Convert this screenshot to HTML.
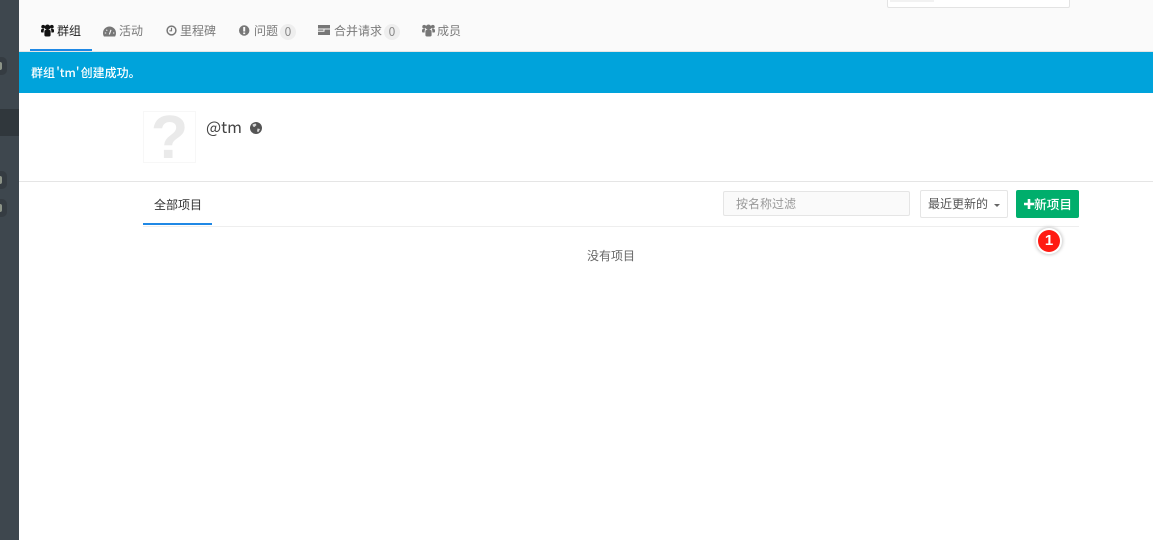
<!DOCTYPE html>
<html lang="zh">
<head>
<meta charset="utf-8">
<style>
html,body{margin:0;padding:0;background:#fff;}
body{width:1153px;height:540px;position:relative;overflow:hidden;font-family:"Noto Sans CJK SC","Liberation Sans",sans-serif;font-size:12px;color:#555;}
.a{position:absolute;white-space:nowrap;line-height:18px;}
svg{position:absolute;display:block;}
.bdg{position:absolute;left:-8px;width:15px;height:18px;background:#353c42;border-radius:5px;}
.bdg i{position:absolute;left:7px;top:5px;width:3px;height:8px;background:#8d9488;border-radius:0 2px 2px 0;}
.cnt{position:absolute;width:16px;height:16px;border-radius:8px;background:#eee;color:#888;font-size:12px;line-height:16px;text-align:center;}
</style>
</head>
<body>
<div class="a" style="left:19px;top:0;width:1134px;height:51px;background:#fafafa;"></div>
<div class="a" style="left:19px;top:51px;width:1134px;height:1px;background:#e5e5e5;"></div>

<div class="a" style="left:887px;top:-5px;width:181px;height:11px;background:#fff;border:1px solid #e3e3e3;border-radius:2px;"></div>
<div class="a" style="left:890px;top:0;width:44px;height:2px;background:#f2f2f2;"></div>

<div class="a" style="left:0;top:0;width:19px;height:540px;background:#3e474e;"></div>
<div class="a" style="left:0;top:109px;width:19px;height:27px;background:#30373c;"></div>
<div class="bdg" style="top:57px;"><i></i></div>
<div class="bdg" style="top:171px;"><i></i></div>
<div class="bdg" style="top:199px;"><i></i></div>

<svg style="left:41px;top:24px" width="13" height="13" viewBox="0 0 13 13"><g fill="#111"><circle cx="6.500" cy="3.300" r="2.800"/><circle cx="2.200" cy="2.800" r="1.900"/><circle cx="10.800" cy="2.800" r="1.900"/><path d="M0 6.200Q0 5 1.200 5H3.200Q2.600 6 2.600 8.500H.8Q0 8.500 0 7.500zM13 6.200Q13 5 11.800 5H9.800Q10.400 6 10.400 8.500H12.200Q13 8.500 13 7.500z"/><path d="M3.400 7.500Q3.400 6 4.600 6H8.400Q9.600 6 9.600 7.500V11Q9.600 12.500 8 12.500H5Q3.400 12.500 3.400 11z"/></g></svg>
<div class="a" style="left:57px;top:22px;color:#222;">群组</div>
<div class="a" style="left:30px;top:49px;width:62px;height:2px;background:#1f88e5;"></div>

<svg style="left:103px;top:26px" width="13" height="11" viewBox="0 0 13 11"><path fill="#777" d="M6.500.5A6.500 6.500 0 0 0 0 7c0 1.300.3 2.400.9 3.500h11.200c.6-1.100.9-2.200.9-3.500A6.500 6.500 0 0 0 6.500.5z"/><path stroke="#fafafa" stroke-width="1.100" fill="none" d="M6.300 8.500L8 3.800M1.800 7h1.400M10 7h1.300M3.400 3.800l.8.800"/></svg>
<div class="a" style="left:119px;top:22px;color:#7a7a7a;">活动</div>

<svg style="left:166px;top:25px" width="11" height="11" viewBox="0 0 11 11"><circle cx="5.500" cy="5.500" r="4.400" fill="none" stroke="#777" stroke-width="1.500"/><path d="M5.500 2.800v3H3.400" fill="none" stroke="#777" stroke-width="1.200"/></svg>
<div class="a" style="left:180px;top:22px;color:#7a7a7a;">里程碑</div>

<svg style="left:239px;top:25px" width="11" height="11" viewBox="0 0 11 11"><circle cx="5.200" cy="5.500" r="5.200" fill="#777"/><path d="M4.200 2h2v4.500h-2zM4.200 7.500h2v1.600h-2z" fill="#fafafa"/></svg>
<div class="a" style="left:254px;top:22px;color:#7a7a7a;">问题</div>
<div class="cnt" style="left:280px;top:24px;">0</div>

<svg style="left:318px;top:25px" width="12" height="10" viewBox="0 0 12 10"><path fill="#777" d="M0 0h12v3.500H0zM0 4.500h5.500v1.200H0zM6.500 4.500H12V10H0V6.800h6.500z"/></svg>
<div class="a" style="left:334px;top:22px;color:#7a7a7a;">合并请求</div>
<div class="cnt" style="left:384px;top:24px;">0</div>

<svg style="left:422px;top:24px" width="13" height="13" viewBox="0 0 13 13"><g fill="#777"><circle cx="6.500" cy="3.300" r="2.800"/><circle cx="2.200" cy="2.800" r="1.900"/><circle cx="10.800" cy="2.800" r="1.900"/><path d="M0 6.200Q0 5 1.200 5H3.200Q2.600 6 2.600 8.500H.8Q0 8.500 0 7.500zM13 6.200Q13 5 11.800 5H9.800Q10.400 6 10.400 8.500H12.200Q13 8.500 13 7.500z"/><path d="M3.400 7.500Q3.400 6 4.600 6H8.400Q9.600 6 9.600 7.500V11Q9.600 12.500 8 12.500H5Q3.400 12.500 3.400 11z"/></g></svg>
<div class="a" style="left:437px;top:22px;color:#7a7a7a;">成员</div>

<div class="a" style="left:19px;top:52px;width:1134px;height:41px;background:#00a3db;"></div>
<div class="a" style="left:31px;top:64px;color:#fff;font-size:12px;font-weight:500;word-spacing:-1.500px;">群组 'tm' 创建成功。</div>

<div class="a" style="left:143px;top:111px;width:51px;height:50px;background:#fff;border:1px solid #f7f7f7;overflow:hidden;"></div>
<div class="a" style="left:143px;top:112px;width:53px;height:50px;line-height:50px;text-align:center;font-family:'Liberation Sans',sans-serif;font-size:61px;font-weight:bold;color:#eaeaea;">?</div>
<div class="a" style="left:206px;top:117px;font-size:16px;color:#444;">@tm</div>
<svg style="left:250px;top:122px" width="12" height="12" viewBox="0 0 12 12"><circle cx="6" cy="6" r="6" fill="#555"/><path fill="#d9d9d9" d="M2.500 2.500L5.500 1.500 6.500 3 4.500 5 3 4.500zM7.500 6.500L10 7 8.500 10 7 9.500z"/></svg>

<div class="a" style="left:19px;top:181px;width:1134px;height:1px;background:#e5e5e5;"></div>

<div class="a" style="left:154px;top:196px;color:#333;font-size:12px;">全部项目</div>
<div class="a" style="left:143px;top:223px;width:69px;height:2px;background:#1f88e5;"></div>
<div class="a" style="left:143px;top:226px;width:936px;height:1px;background:#eee;"></div>

<div class="a" style="left:723px;top:191px;width:185px;height:23px;background:#fafafa;border:1px solid #e5e5e5;border-radius:2px;"></div>
<div class="a" style="left:736px;top:195px;color:#999;font-size:12px;">按名称过滤</div>

<div class="a" style="left:920px;top:190px;width:86px;height:26px;background:#fff;border:1px solid #e5e5e5;border-radius:2px;"></div>
<div class="a" style="left:928px;top:195px;color:#555;font-size:12px;">最近更新的</div>
<div class="a" style="left:994px;top:204px;width:0;height:0;border-left:3px solid transparent;border-right:3px solid transparent;border-top:3px solid #666;"></div>

<div class="a" style="left:1016px;top:190px;width:63px;height:28px;background:#00ae6c;border-radius:2px;"></div>
<svg style="left:1024px;top:199px" width="10" height="10" viewBox="0 0 10 10"><path fill="#fff" d="M3.700 0h2.600v3.700H10v2.600H6.300V10H3.700V6.300H0V3.700h3.700z"/></svg>
<div class="a" style="left:1034px;top:195px;color:#fff;font-size:12.700px;font-weight:500;">新项目</div>

<div class="a" style="left:1038px;top:230px;width:22px;height:22px;border-radius:50%;background:#ff1a12;box-shadow:0 0 0 2px #fff,0 0 3px 3px #ccc;color:#fff;font-family:'Liberation Sans',sans-serif;font-size:15px;font-weight:bold;line-height:22px;text-align:center;">1</div>

<div class="a" style="left:587px;top:247px;color:#666;font-size:12px;">没有项目</div>
</body>
</html>
